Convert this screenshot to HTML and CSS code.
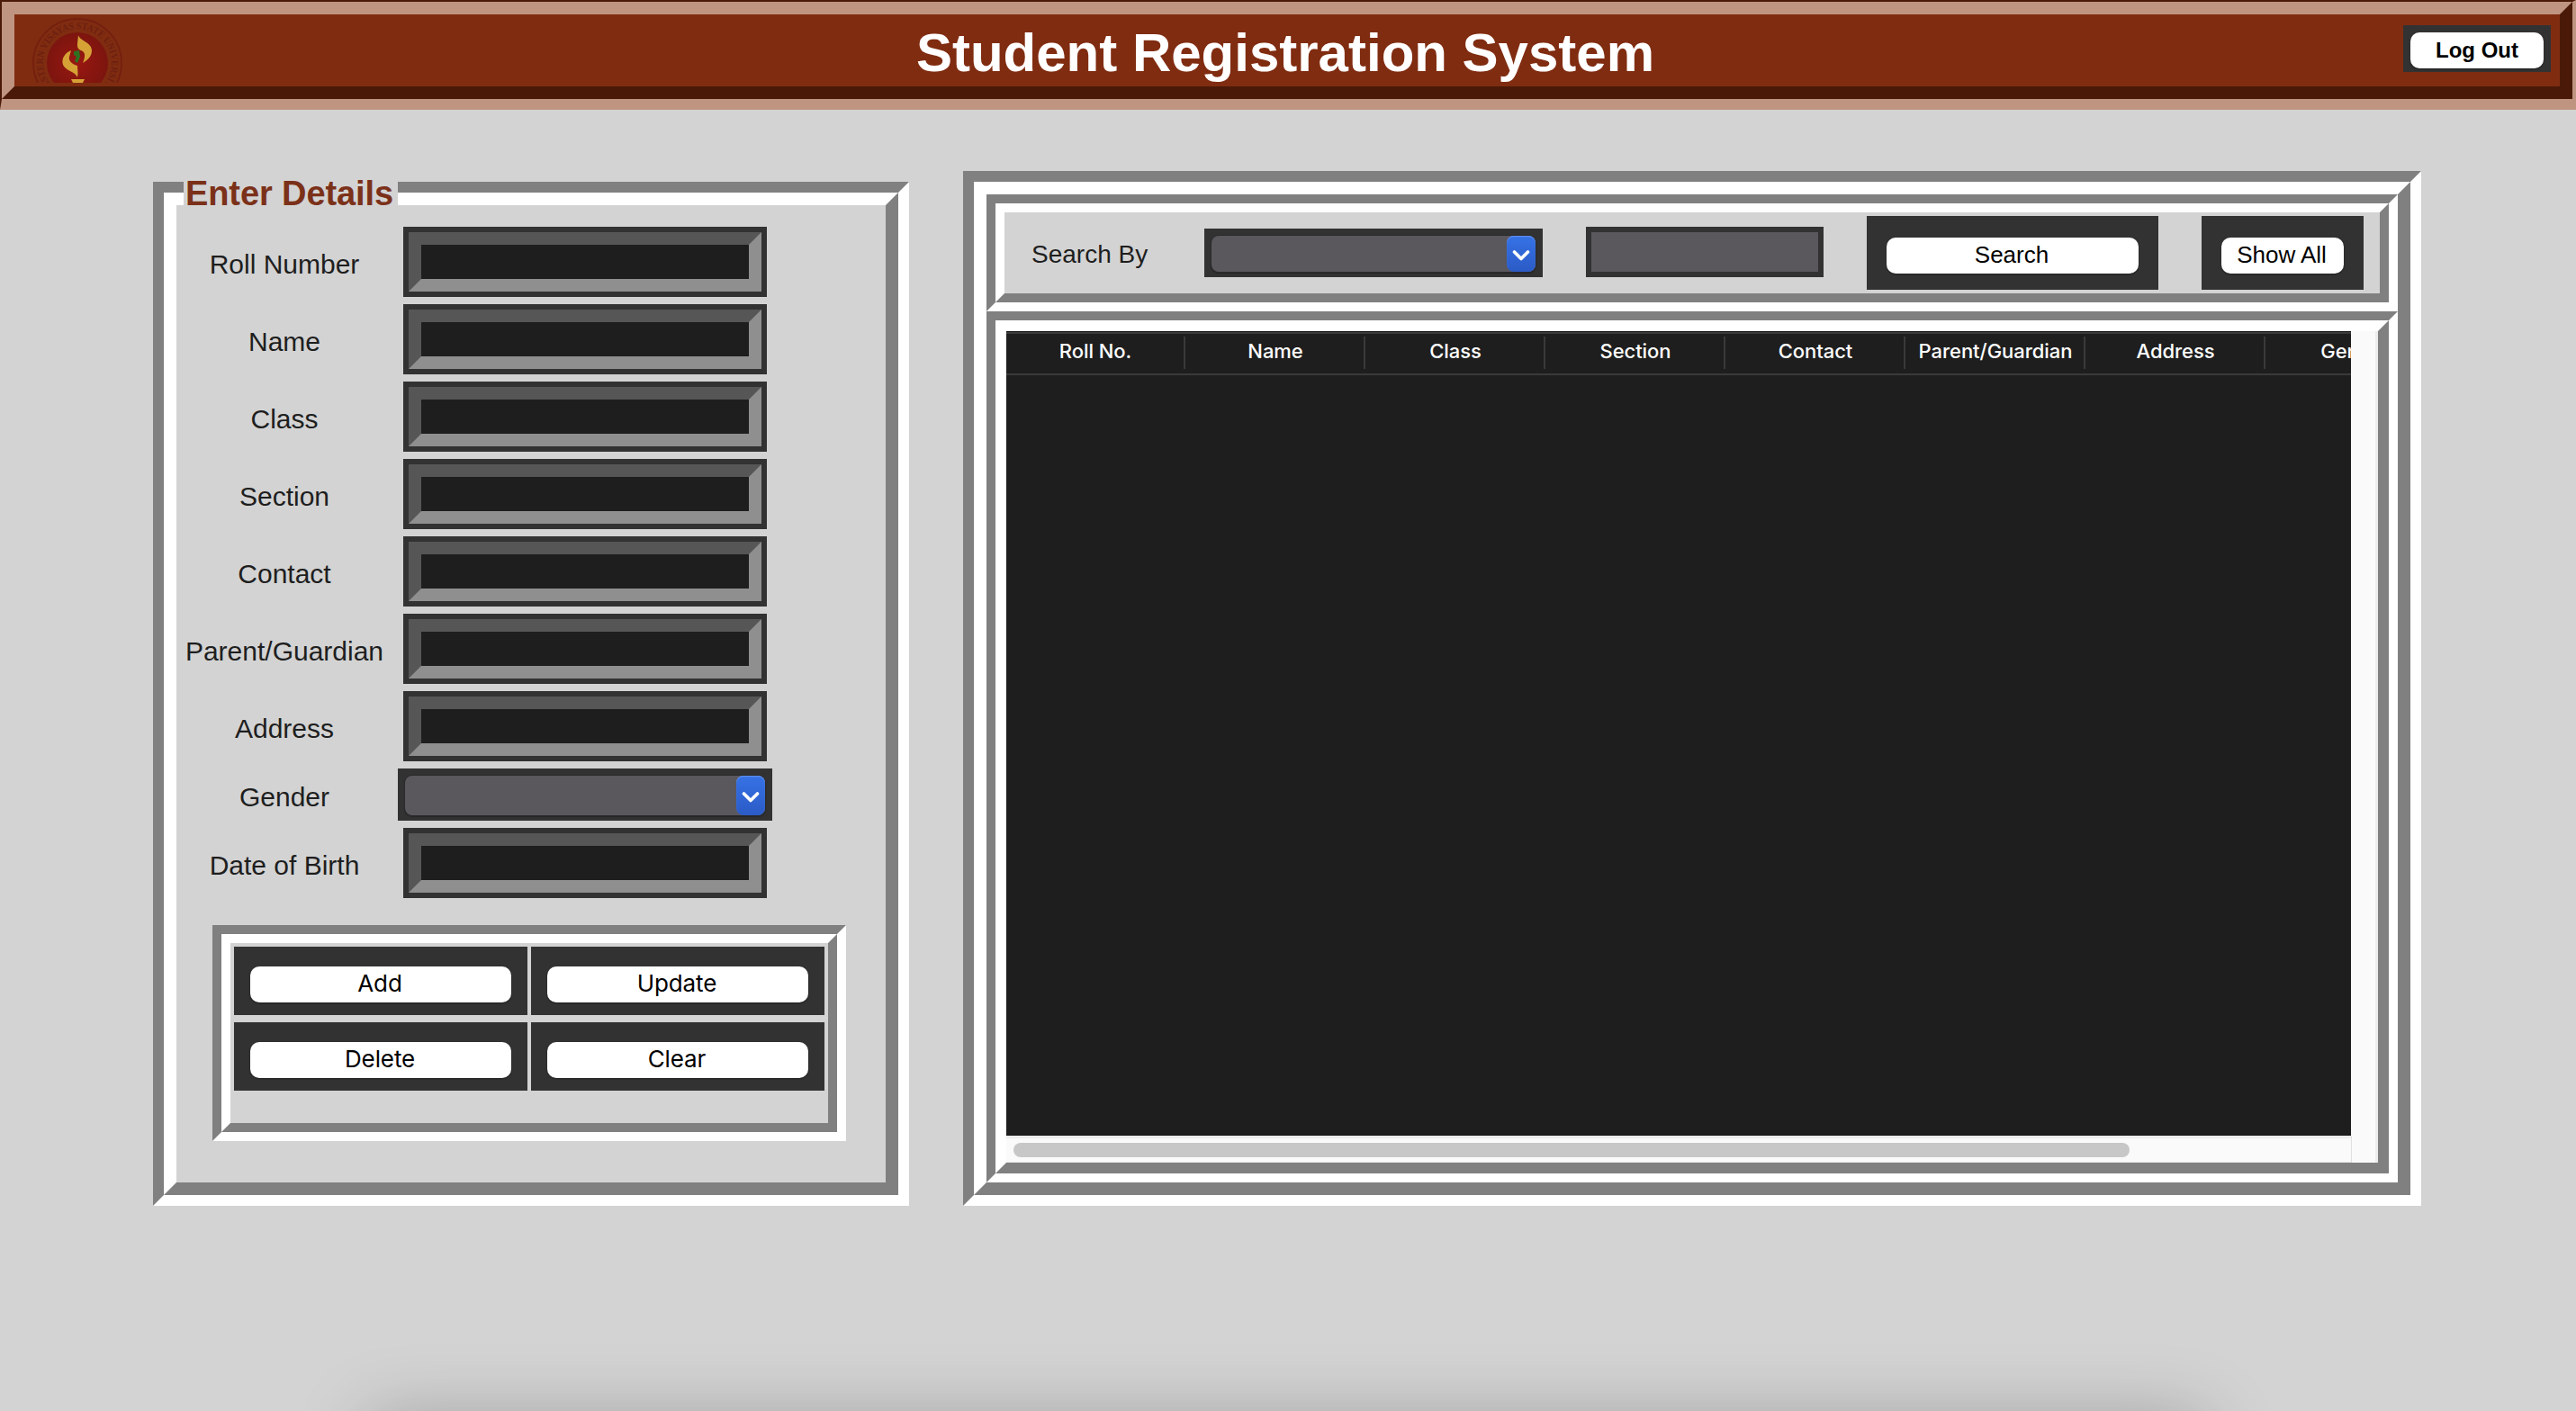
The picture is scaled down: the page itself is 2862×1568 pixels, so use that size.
FILE: index.html
```html
<!DOCTYPE html>
<html lang="en">
<head>
<meta charset="utf-8">
<title>Student Registration System</title>
<link rel="stylesheet" href="styles.css">
</head>
<body>
<header class="header">
  <div class="header-in">
    <svg class="logo" width="100" height="72" viewBox="0 0 100 72">
      <defs>
        <radialGradient id="disk"><stop offset="0" stop-color="#9a1712"/><stop offset="1" stop-color="#7c150e"/></radialGradient>
        <path id="ring" d="M26 79.5A38 38 0 1 1 74 79.5"/>
      </defs>
      <circle cx="50" cy="50" r="49" fill="none" stroke="#74200f" stroke-width="2"/>
      <circle cx="50" cy="50" r="34" fill="url(#disk)"/>
      <text class="seal"><textPath href="#ring" startOffset="50%" text-anchor="middle" textLength="186" lengthAdjust="spacingAndGlyphs">EASTERN VISAYAS STATE UNIVERSITY</textPath></text>
      <path d="M51 19C52 25 66 27 66 36C66 43 61 47 56 50C58 45 59 41 57 38C54 35 49 36 50 28Z" fill="#d6a236"/>
      <path d="M43 36C36 39 33 44 33.500 50C35 59 48 59 50 66C51 61 50 57 50 53C43 51 40 47 41 43Z" fill="#d6a236"/>
      <path d="M46 37L52 36L53 43L50 50L47 48L49 43L46 41Z" fill="#2f7020"/>
      <path d="M43 68H58L56 72H45Z" fill="#d6a236"/>
    </svg>
    <h1 class="title">Student Registration System</h1>
    <div class="logout-frame"><button class="btn logout">Log Out</button></div>
  </div>
</header>
<main class="main">
  <section class="details groove12">
    <div class="groove-in14">
      <h2 class="legend">Enter Details</h2>
      <div class="form">
        <div class="row"><label>Roll Number</label><div class="entry"><i></i></div></div>
        <div class="row"><label>Name</label><div class="entry"><i></i></div></div>
        <div class="row"><label>Class</label><div class="entry"><i></i></div></div>
        <div class="row"><label>Section</label><div class="entry"><i></i></div></div>
        <div class="row"><label>Contact</label><div class="entry"><i></i></div></div>
        <div class="row"><label>Parent/Guardian</label><div class="entry"><i></i></div></div>
        <div class="row"><label>Address</label><div class="entry"><i></i></div></div>
        <div class="row row-combo"><label>Gender</label><div class="combo combo-gender"><div class="combo-field"><span class="arrow"><svg width="20" height="16" viewBox="0 0 20 16"><path d="M2.5 4L10 11.5L17.5 4"/></svg></span></div></div></div>
        <div class="row"><label>Date of Birth</label><div class="entry"><i></i></div></div>
      </div>
      <div class="actions groove10">
        <div class="groove-in10 actions-grid">
          <div class="cell"><button class="btn">Add</button></div>
          <div class="cell"><button class="btn">Update</button></div>
          <div class="cell"><button class="btn">Delete</button></div>
          <div class="cell"><button class="btn">Clear</button></div>
        </div>
      </div>
    </div>
  </section>
  <section class="records groove12">
    <div class="groove-in14">
      <div class="groove10 search">
        <div class="groove-in10 search-in">
          <label class="search-label">Search By</label>
          <div class="combo combo-search"><div class="combo-field"><span class="arrow"><svg width="20" height="16" viewBox="0 0 20 16"><path d="M2.5 4L10 11.5L17.5 4"/></svg></span></div></div>
          <div class="search-entry"></div>
          <div class="search-frame"><button class="btn">Search</button></div>
          <div class="search-frame show-all"><button class="btn">Show All</button></div>
        </div>
      </div>
      <div class="groove10 table-box">
        <div class="groove-in12 table-in">
          <div class="table">
            <div class="thead">
              <span>Roll No.</span><span>Name</span><span>Class</span><span>Section</span><span>Contact</span><span>Parent/Guardian</span><span>Address</span><span>Gender</span>
            </div>
          </div>
          <div class="vbar"></div>
          <div class="hbar"><div class="thumb"></div></div>
          <div class="corner"></div>
        </div>
      </div>
    </div>
  </section>
</main>
<div class="dock-shadow"></div>
</body>
</html>
```
FILE: styles.css
```css
* { box-sizing: border-box; }
body {
  margin: 0;
  width: 2862px;
  height: 1568px;
  overflow: hidden;
  background: #d3d3d3;
  color: #1e1e1e;
  font-family: "Liberation Sans", Arial, sans-serif;
}

/* header */
.header {
  height: 122px;
  border-style: solid;
  border-width: 2px 4px 12px 2px;
  border-color: #4a1908 #bf9480 #bf9480 #4a1908;
}
.header-in {
  height: 108px;
  background: #802c11;
  border: 14px solid;
  border-color: #bf9480 #4a1908 #4a1908 #bf9480;
  display: grid;
  grid-template-columns: 170px 1fr 174px;
  align-items: start;
}
.logo { margin: 4px 0 0 20px; display: block; }
.seal { font: bold 11px "Liberation Serif", serif; fill: #6c1f10; }
.title {
  margin: 9px 0 0;
  font-size: 60px;
  line-height: 68px;
  font-weight: bold;
  color: #fff;
  text-align: center;
}
.logout-frame { width: 164px; height: 52px; margin-top: 12px; padding: 8px 8px 4px; background: #323232; }

.btn {
  display: block;
  width: 100%;
  height: 40px;
  padding: 0 2px 2px 0;
  border: 0;
  border-radius: 10px;
  background: #fff;
  color: #000;
  font: 26px/36px Inter, sans-serif;
  letter-spacing: -0.1px;
  box-shadow: 0 1px 2px rgba(0, 0, 0, .4);
}
.btn.logout { padding: 0; font: bold 24px/40px "Liberation Sans", Arial, sans-serif; letter-spacing: 0; }

/* two-tone grooves */
.groove12, .groove10 { border: 12px solid; border-color: #808080 #fff #fff #808080; }
.groove10 { border-width: 10px; }
.groove-in14, .groove-in12, .groove-in10 { height: 100%; border: 14px solid; border-color: #fff #808080 #808080 #fff; }
.groove-in12 { border-width: 12px; }
.groove-in10 { border-width: 10px; }

.main { display: flex; align-items: flex-start; padding: 68px 0 0 170px; gap: 60px; }

/* details form */
.details { width: 840px; height: 1138px; margin-top: 12px; }
.legend {
  width: 238px;
  height: 34px;
  margin: -34px 0 0 8px;
  background: #d3d3d3;
  color: #7b3119;
  font-size: 38px;
  line-height: 42px;
  letter-spacing: -0.1px;
  padding-left: 2px;
  white-space: nowrap;
}
.form { display: flex; flex-direction: column; gap: 8px; padding-top: 24px; }
.row { display: grid; grid-template-columns: 240px 430px; height: 78px; align-items: center; }
.row label { font-size: 30px; line-height: 34px; padding: 6px 0 0 0; text-align: center; white-space: nowrap; }
.row-combo { height: 58px; }
.entry { justify-self: center; width: 404px; height: 78px; padding: 6px; background: #323232; margin-left: -2px; }
.entry i { display: block; height: 66px; border: 14px solid; border-color: #565656 #8f8f8f #8f8f8f #565656; background: #1e1e1e; }
.combo { background: #323232; padding: 8px; }
.combo-gender { justify-self: center; width: 416px; height: 58px; margin-left: -2px; }
.combo-field {
  height: 44px;
  border-radius: 8px;
  background: #5a575d;
  display: flex;
  justify-content: flex-end;
  box-shadow: 0 0 0 1px #2a2a2b, 0 1px 1px 1px #262626;
}
.combo-gender .combo-field { margin-top: 0; }
.arrow {
  width: 32px;
  border-radius: 8px;
  background: linear-gradient(#3672e6, #2b5bc6);
  box-shadow: inset 0 1px 1px #6794ec;
  display: grid;
  place-items: center;
}
.arrow svg { margin-top: 4px; fill: none; stroke: #fff; stroke-width: 3.6; stroke-linecap: round; stroke-linejoin: round; }

.actions { width: 704px; height: 240px; margin: 30px 0 0 40px; }
.actions-grid {
  display: grid;
  grid-template-columns: 326px 326px;
  grid-auto-rows: 76px;
  align-content: start;
  gap: 8px 4px;
  padding: 4px;
}
.cell { background: #323232; padding: 22px 18px 0; }

/* search bar */
.records { width: 1620px; height: 1150px; }
.search { height: 130px; }
.search-in { display: flex; align-items: flex-start; padding: 4px 0 0 30px; }
.search-label { width: 192px; font-size: 28px; line-height: 32px; padding-top: 27px; }
.combo-search { width: 376px; height: 54px; margin-top: 14px; }
.combo-search .combo-field { height: 40px; }
.search-entry { width: 264px; height: 56px; margin: 12px 48px 0; background: #5a575d; border: 6px solid #323232; }
.search-frame { width: 324px; height: 82px; padding: 24px 22px 0; background: #323232; }
.search-frame .btn { font: 26px/37px "Liberation Sans", Arial, sans-serif; letter-spacing: 0; }
.show-all { width: 180px; margin-left: 48px; }

/* table */
.table-box { height: 968px; }
.table-in { display: grid; grid-template: 894px 30px / 1494px 30px; background: #fafafa; }
.table { background: #1e1e1e; overflow: hidden; border-top: 1px solid #141414; border-bottom: 1px solid #141414; }
.thead {
  width: 1600px;
  height: 48px;
  margin-left: -1px;
  border-top: 2px solid #3a3a3a;
  border-bottom: 2px solid #3a3a3a;
  display: flex;
}
.thead span {
  width: 200px;
  height: 36px;
  margin-top: 3px;
  padding-left: 2px;
  border-right: 2px solid #3a3a3a;
  color: #fff;
  font: 500 22px/32px Inter, sans-serif;
  letter-spacing: -0.05px;
  text-align: center;
  white-space: nowrap;
}
.vbar { border-right: 3px solid #ededed; }
.hbar { border-top: 3px solid #ededed; border-bottom: 1px solid #e8e8e8; padding: 5px 0 0 8px; }
.thumb { width: 1240px; height: 16px; border-radius: 8px; background: #c7c7c7; }
.corner { border-left: 1px solid #e0e0e0; border-right: 3px solid #ededed; }

.dock-shadow {
  position: fixed;
  left: 410px;
  top: 1577px;
  width: 2040px;
  height: 200px;
  box-shadow: 0 0 80px rgba(0, 0, 0, .26);
}
```
